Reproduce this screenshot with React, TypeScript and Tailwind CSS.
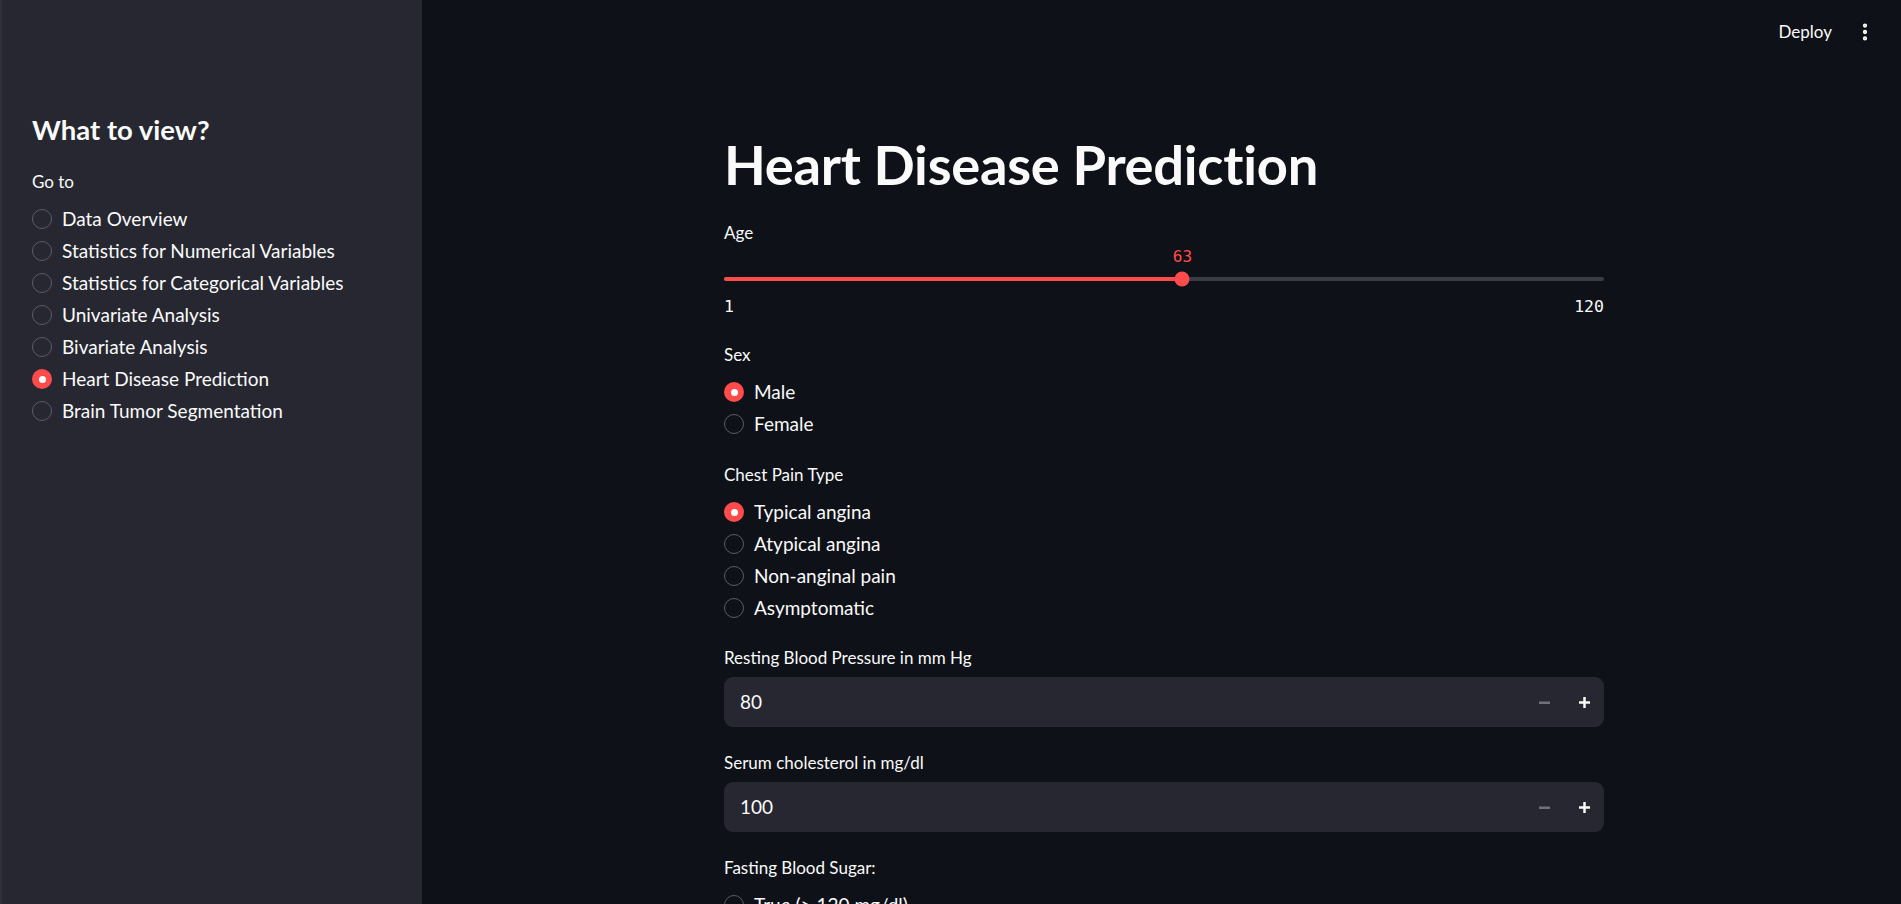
import React from 'react';
import { EllipsisVertical } from 'lucide-react';

const FONT = { fontFamily: 'Lato, "Noto Sans", sans-serif' };
const MONO = { fontFamily: '"DejaVu Sans Mono", "Liberation Mono", monospace' };

const NAV = [
  'Data Overview',
  'Statistics for Numerical Variables',
  'Statistics for Categorical Variables',
  'Univariate Analysis',
  'Bivariate Analysis',
  'Heart Disease Prediction',
  'Brain Tumor Segmentation',
];

const RadioDot: React.FC<{ checked: boolean }> = ({ checked }) =>
  checked ? (
    <span className="flex h-5 w-5 shrink-0 items-center justify-center rounded-full bg-[#ff4b4b]">
      <span className="h-[7px] w-[7px] rounded-full bg-white" />
    </span>
  ) : (
    <span className="h-5 w-5 shrink-0 rounded-full border border-[#5a5c66]" />
  );

const Radio: React.FC<{ label: string; checked?: boolean }> = ({ label, checked = false }) => (
  <div className="flex h-8 items-center gap-[10px]">
    <RadioDot checked={checked} />
    <span className="text-[19px] text-[#fafafa]">{label}</span>
  </div>
);

const Label: React.FC<{ children: React.ReactNode; className?: string }> = ({ children, className = '' }) => (
  <div className={`h-6 text-[17px] leading-6 text-[#fafafa] ${className}`}>{children}</div>
);

const NumberInput: React.FC<{ value: number }> = ({ value }) => (
  <div className="mt-[7px] flex h-[50px] items-center rounded-[9px] bg-[#262730] pl-4 pr-[14px]">
    <span className="flex-1 text-[19px] text-[#fafafa]">{value}</span>
    <div className="flex items-center gap-[29px]">
      <svg width="11" height="11" viewBox="0 0 11 11">
        <rect x="0" y="4.5" width="11" height="2.5" fill="#6f717b" />
      </svg>
      <svg width="11" height="11" viewBox="0 0 11 11">
        <rect x="0" y="4.25" width="11" height="2.5" fill="#fafafa" />
        <rect x="4.25" y="0" width="2.5" height="11" fill="#fafafa" />
      </svg>
    </div>
  </div>
);

const AgeSlider: React.FC<{ min: number; max: number; value: number }> = ({ min, max, value }) => {
  const pct = ((value - min) / (max - min)) * 100;
  return (
    <div>
      <div className="relative mt-[2px] h-5">
        <span
          className="absolute top-0 -translate-x-1/2 text-[16px] leading-5 text-[#ff4b4b]"
          style={{ ...MONO, left: `${pct}%` }}
        >
          {value}
        </span>
      </div>
      <div className="relative mt-px flex h-[22px] items-center">
        <div className="h-1 w-full rounded-full bg-[#3a3c45]">
          <div className="h-1 rounded-full bg-[#ff4b4b]" style={{ width: `${pct}%` }} />
        </div>
        <span
          className="absolute top-1/2 h-[15px] w-[15px] -translate-x-1/2 -translate-y-1/2 rounded-full bg-[#ff4b4b]"
          style={{ left: `${pct}%` }}
        />
      </div>
      <div className="mt-[6px] flex h-[22px] items-center justify-between text-[16.5px] text-[#fafafa]" style={MONO}>
        <span>{min}</span>
        <span>{max}</span>
      </div>
    </div>
  );
};

export default function App() {
  return (
    <div className="flex h-[904px] w-full overflow-hidden bg-[#0e1117] text-[#fafafa]" style={FONT}>
      {/* Sidebar */}
      <aside className="h-full w-[422px] shrink-0 border-l-2 border-[#2f3038] bg-[#262730] pl-[30px]">
        <h2 className="mt-[112px] text-[27.5px] font-bold leading-9">What to view?</h2>
        <div className="mt-[23px] text-[17px] leading-[22px]">Go to</div>
        <div className="mt-[10px] flex flex-col">
          {NAV.map((n) => (
            <Radio key={n} label={n} checked={n === 'Heart Disease Prediction'} />
          ))}
        </div>
      </aside>

      {/* Main */}
      <main className="flex h-full min-w-0 flex-1 flex-col">
        <header className="flex h-[63px] shrink-0 items-center justify-end gap-[22px] pr-[25px]">
          <span className="text-[17px]">Deploy</span>
          <EllipsisVertical size={22} strokeWidth={2.7} className="text-[#fafafa]" />
        </header>

        <div className="mx-auto w-[885px] pl-[5px]">
          <h1 className="mt-[68px] text-[54.3px] font-bold leading-[66px] tracking-[-0.005em]">Heart Disease Prediction</h1>

          <Label className="mt-[24px]">Age</Label>
          <AgeSlider min={1} max={120} value={63} />

          <Label className="mt-[25px]">Sex</Label>
          <div className="mt-[9px]">
            <Radio label="Male" checked />
            <Radio label="Female" />
          </div>

          <Label className="mt-[23px]">Chest Pain Type</Label>
          <div className="mt-[9px]">
            <Radio label="Typical angina" checked />
            <Radio label="Atypical angina" />
            <Radio label="Non-anginal pain" />
            <Radio label="Asymptomatic" />
          </div>

          <Label className="mt-[22px]">Resting Blood Pressure in mm Hg</Label>
          <NumberInput value={80} />

          <Label className="mt-[24px]">Serum cholesterol in mg/dl</Label>
          <NumberInput value={100} />

          <Label className="mt-[24px]">Fasting Blood Sugar:</Label>
          <div className="mt-[9px]">
            <Radio label="True (> 120 mg/dl)" />
            <Radio label="False (≤ 120 mg/dl)" checked />
          </div>
        </div>
      </main>
    </div>
  );
}
